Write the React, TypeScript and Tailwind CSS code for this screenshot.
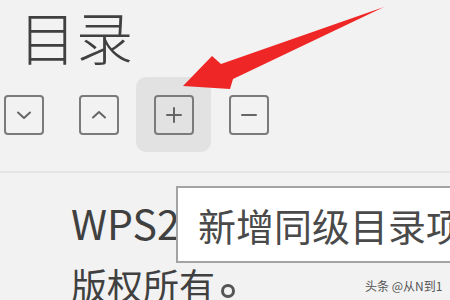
import React from "react";

const cjk = { fontFamily: '"Noto Sans CJK SC", "Noto Sans", sans-serif' };

function Btn({ kind, hover }: { kind: "down" | "up" | "plus" | "minus"; hover?: boolean }) {
  return (
    <div
      className={`w-[75px] h-[75px] flex items-center justify-center rounded-[10px] ${
        hover ? "bg-[#e2e2e2]" : ""
      }`}
    >
      <div className="w-[40px] h-[40px] border-2 border-[#7b7b7b] rounded-[4px] flex items-center justify-center">
        <svg width="20" height="20" viewBox="0 0 20 20" fill="none" stroke="#666" strokeWidth="2" strokeLinecap="round" strokeLinejoin="round">
          {kind === "down" && <path d="M4 7.5 L10 13 L16 7.5" />}
          {kind === "up" && <path d="M4 12.5 L10 7 L16 12.5" />}
          {kind === "plus" && <path d="M10 3 V17 M3 10 H17" />}
          {kind === "minus" && <path d="M3 10 H17" />}
        </svg>
      </div>
    </div>
  );
}

export default function App() {
  return (
    <div className="relative w-[450px] h-[300px] overflow-hidden bg-[#f2f2f2] text-[#404040]" style={cjk}>
      <div className="pl-[19px] pt-[7px] h-[63px] text-[57px] leading-none font-light">目录</div>
      <div className="flex ml-[-14px] mt-[14px]">
        <Btn kind="down" />
        <Btn kind="up" />
        <Btn kind="plus" hover />
        <Btn kind="minus" />
      </div>
      <div className="mt-[19px] border-t-2 border-[#e4e4e4]" />
      <div className="pt-[14px] pl-[71px]">
        <div className="h-[77px] flex items-center pb-[6px] text-[41px] leading-none">
          WPS2
        </div>
        <div className="mt-[2px] flex items-center text-[36px] leading-none">
          版权所有
          <span className="ml-[6px] mt-[14px] inline-block w-[14px] h-[14px] rounded-full border-[3px] border-[#555]" />
        </div>
      </div>

      <div className="absolute left-[176px] top-[186px] w-[320px] h-[77px] bg-white border-2 border-[#a3a3a3] flex items-center pl-[20px] text-[38px] leading-none text-[#4a4a4a] whitespace-nowrap">
        新增同级目录项
      </div>

      <div className="absolute left-[365px] top-[280px] text-[12px] leading-none text-[#555] whitespace-nowrap">
        头条 @从N到1
      </div>

      <svg className="absolute left-0 top-0" width="450" height="300" viewBox="0 0 450 300">
        <polygon points="183,86 212,56 221,64 384,7 233,79 230,89" fill="#ef2626" />
      </svg>
    </div>
  );
}
